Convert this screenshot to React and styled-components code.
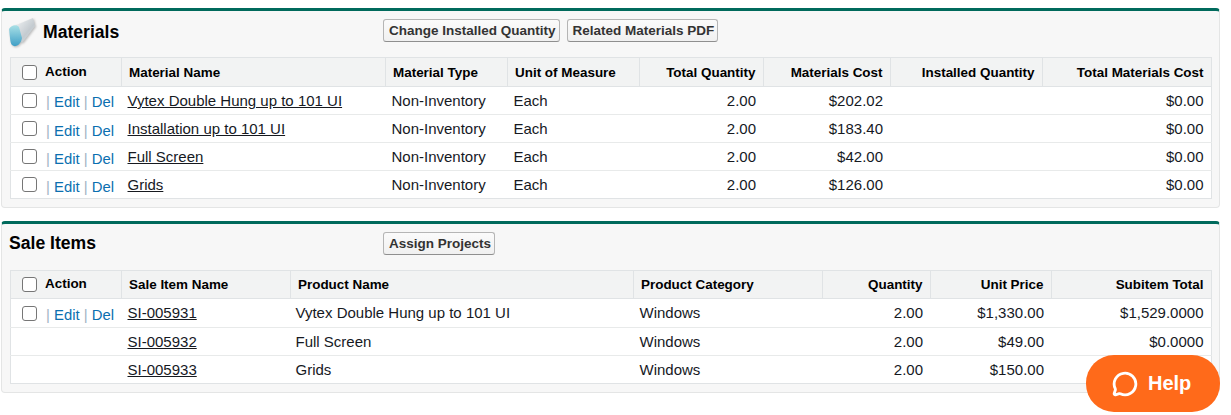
import React from "react"
import styled, { createGlobalStyle } from "styled-components"
import { MessageCircle } from "lucide-react"

const GlobalStyle = createGlobalStyle`
  html, body {
    margin: 0;
    padding: 0;
    background: #fff;
    color: #16191f;
    font-family: "Liberation Sans", Arial, sans-serif;
  }
`

const Page = styled.div`
  display: flex;
  flex-direction: column;
  gap: 13px;
  width: 1220px;
  padding: 8px 0 0 1px;
  box-sizing: border-box;
`

const Panel = styled.section`
  box-sizing: border-box;
  height: ${(p) => p.$height}px;
  padding: 0 8px;
  background: #f7f7f7;
  border: 1px solid #e4e5e5;
  border-top: 3px solid #006a5c;
  border-radius: 4px;
`

const PanelHead = styled.div`
  display: flex;
  align-items: center;
  box-sizing: border-box;
  height: 46px;
  padding-bottom: 8px;
`

const TitleWrap = styled.div`
  display: flex;
  align-items: center;
  gap: 7px;
  width: 373px;
  flex: none;
`

const Title = styled.h2`
  margin: ${(p) => (p.$icon ? "5px 0 0" : "0 0 0 -1px")};
  font-size: 17.6px;
  font-weight: 700;
  color: #000;
`

const Buttons = styled.div`
  display: flex;
  gap: 7px;
`

const Btn = styled.button`
  height: 23px;
  padding: 0 3px 0 5px;
  font-family: inherit;
  font-size: 13.5px;
  font-weight: 700;
  color: #333;
  background: linear-gradient(#fbfbfb, #f0f0f0);
  border: 1px solid #b5b5b5;
  border-bottom-color: #8f8f8f;
  border-radius: 3px;
  white-space: nowrap;
`

const Table = styled.table`
  width: 1201px;
  table-layout: fixed;
  border-collapse: collapse;
  background: #fff;
  border: 1px solid #e0e3e5;
`

const Col = styled.col`
  width: ${(p) => p.$w}px;
`

const HeadRow = styled.tr`
  height: ${(p) => p.$height}px;
  background: #f2f3f3;
`

const Th = styled.th`
  padding: 0 7.5px 0 ${(p) => p.$pl ?? 7}px;
  font-size: 13.45px;
  font-weight: 700;
  color: #000;
  text-align: ${(p) => (p.$right ? "right" : "left")};
  border-left: 1px solid #e0e3e5;
  border-bottom: 1px solid #e0e3e5;
  white-space: nowrap;
  &:first-child {
    border-left: 0;
  }
`

const Row = styled.tr`
  height: ${(p) => p.$height || 28}px;
  border-top: 1px solid #e8eaea;
`

const Td = styled.td`
  padding: 0 7.5px ${(p) => p.$pb || 0}px ${(p) => p.$pl ?? 6}px;
  font-size: 15px;
  color: #16191f;
  text-align: ${(p) => (p.$right ? "right" : "left")};
  white-space: nowrap;
`

const ActionTd = styled.td`
  padding: 0;
`

const ActionCell = styled.div`
  display: flex;
  align-items: center;
  padding-left: 11px;
`

const Check = styled.span`
  display: block;
  flex: none;
  box-sizing: border-box;
  width: 15px;
  height: 15px;
  background: #fff;
  border: 1.5px solid #767676;
  border-radius: 3px;
`

const ActionLabel = styled.span`
  margin-left: 8px;
  position: relative;
  top: -1px;
  font-size: 13.45px;
  font-weight: 700;
  color: #000;
`

const ActionLinks = styled.span`
  margin-left: 9px;
  position: relative;
  top: ${(p) => p.$top}px;
  font-size: 14.85px;
  color: #9fb3c4;
`

const ActionLink = styled.a`
  color: #0b6fb0;
  text-decoration: none;
`

const NameLink = styled.a`
  color: #16191f;
  text-decoration: underline;
`

const HelpButton = styled.button`
  position: fixed;
  left: 1086px;
  top: 355px;
  display: flex;
  align-items: center;
  gap: 10px;
  width: 134px;
  height: 57px;
  padding: 0 0 0 26px;
  border: 0;
  border-radius: 28px;
  background: #ff6a1a;
  color: #fff;
  font-family: inherit;
  font-size: 20px;
  font-weight: 700;
`

const IconSvg = styled.svg`
  flex: none;
  margin: 4px 0 0 -2px;
  filter: drop-shadow(1px 1px 1px rgba(0, 0, 0, 0.25));
`

const MaterialsIcon = () => (
  <IconSvg width="28" height="32" viewBox="0 0 28 32">
    <defs>
      <linearGradient id="tube" x1="0" y1="0" x2="1" y2="1">
        <stop offset="0" stopColor="#f6f7f8" />
        <stop offset="0.6" stopColor="#c4cbd0" />
        <stop offset="1" stopColor="#dfe3e5" />
      </linearGradient>
      <linearGradient id="cap" x1="0" y1="0" x2="0" y2="1">
        <stop offset="0" stopColor="#a9e0e6" />
        <stop offset="1" stopColor="#3f9fc6" />
      </linearGradient>
    </defs>
    <path d="M6 10 L25 2 L27 10 L14 27 Z" fill="url(#tube)" />
    <path d="M1 13 C3 9 9 8 11 11 L14 22 C13 29 7 32 4 29 C2 27 2 20 1 13 Z" fill="url(#cap)" />
  </IconSvg>
)

const ActionHeader = () => (
  <ActionCell>
    <Check />
    <ActionLabel>Action</ActionLabel>
  </ActionCell>
)

const RowActions = ({ top }) => (
  <ActionCell>
    <Check />
    <ActionLinks $top={top}>
      | <ActionLink>Edit</ActionLink> | <ActionLink>Del</ActionLink>
    </ActionLinks>
  </ActionCell>
)

const materials = [
  ["Vytex Double Hung up to 101 UI", "$202.02"],
  ["Installation up to 101 UI", "$183.40"],
  ["Full Screen", "$42.00"],
  ["Grids", "$126.00"],
]

const saleItems = [
  ["SI-005931", "Vytex Double Hung up to 101 UI", "$1,330.00", "$1,529.0000", true],
  ["SI-005932", "Full Screen", "$49.00", "$0.0000", false],
  ["SI-005933", "Grids", "$150.00", "", false],
]

export default function App() {
  return (
    <Page>
      <GlobalStyle />
      <Panel $height={200}>
        <PanelHead>
          <TitleWrap>
            <MaterialsIcon />
            <Title $icon>Materials</Title>
          </TitleWrap>
          <Buttons>
            <Btn>Change Installed Quantity</Btn>
            <Btn>Related Materials PDF</Btn>
          </Buttons>
        </PanelHead>
        <Table>
          <colgroup>
            {[111, 264, 122, 132, 124, 127, 152, 169].map((w, i) => (
              <Col key={i} $w={w} />
            ))}
          </colgroup>
          <thead>
            <HeadRow $height={29}>
              <Th $pl={0}>
                <ActionHeader />
              </Th>
              <Th>Material Name</Th>
              <Th>Material Type</Th>
              <Th>Unit of Measure</Th>
              <Th $right>Total Quantity</Th>
              <Th $right>Materials Cost</Th>
              <Th $right>Installed Quantity</Th>
              <Th $right>Total Materials Cost</Th>
            </HeadRow>
          </thead>
          <tbody>
            {materials.map(([name, cost], i) => (
              <Row key={name}>
                <ActionTd>
                  <RowActions top={i === 0 ? 1 : 2} />
                </ActionTd>
                <Td>
                  <NameLink>{name}</NameLink>
                </Td>
                <Td>Non-Inventory</Td>
                <Td>Each</Td>
                <Td $right>2.00</Td>
                <Td $right>{cost}</Td>
                <Td $right />
                <Td $right>$0.00</Td>
              </Row>
            ))}
          </tbody>
        </Table>
      </Panel>
      <Panel $height={172}>
        <PanelHead>
          <TitleWrap>
            <Title>Sale Items</Title>
          </TitleWrap>
          <Buttons>
            <Btn>Assign Projects</Btn>
          </Buttons>
        </PanelHead>
        <Table>
          <colgroup>
            {[111, 169, 343, 189, 108, 121, 160].map((w, i) => (
              <Col key={i} $w={w} />
            ))}
          </colgroup>
          <thead>
            <HeadRow $height={28}>
              <Th $pl={0}>
                <ActionHeader />
              </Th>
              <Th>Sale Item Name</Th>
              <Th>Product Name</Th>
              <Th>Product Category</Th>
              <Th $right>Quantity</Th>
              <Th $right>Unit Price</Th>
              <Th $right>Subitem Total</Th>
            </HeadRow>
          </thead>
          <tbody>
            {saleItems.map(([id, product, price, total, hasActions], i) => {
              const pb = i === 0 ? 2 : 0
              return (
                <Row key={id} $height={i === 0 ? 29 : 28}>
                  <ActionTd>{hasActions && <RowActions top={2} />}</ActionTd>
                  <Td $pb={pb}>
                    <NameLink>{id}</NameLink>
                  </Td>
                  <Td $pl={5} $pb={pb}>
                    {product}
                  </Td>
                  <Td $pb={pb}>Windows</Td>
                  <Td $right $pb={pb}>
                    2.00
                  </Td>
                  <Td $right $pb={pb}>
                    {price}
                  </Td>
                  <Td $right $pb={pb}>
                    {total}
                  </Td>
                </Row>
              )
            })}
          </tbody>
        </Table>
      </Panel>
      <HelpButton>
        <MessageCircle size={26} strokeWidth={2.6} />
        Help
      </HelpButton>
    </Page>
  )
}
